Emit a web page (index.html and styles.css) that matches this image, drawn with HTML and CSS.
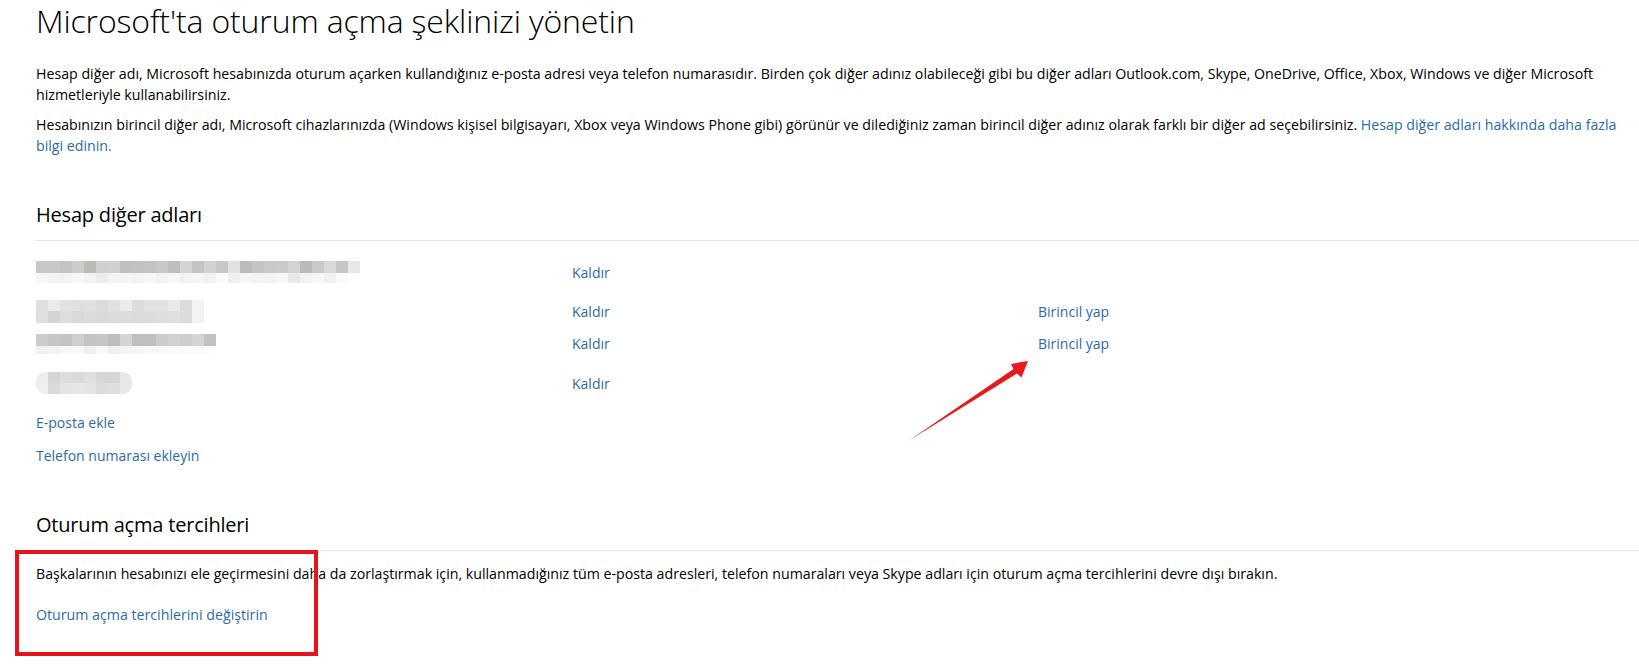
FILE: index.html
```html
<!DOCTYPE html>
<html lang="tr">
<head>
    <meta charset="UTF-8">
    <meta name="viewport" content="width=device-width, initial-scale=1.0">
    <title>Oturum açma şeklinizi yönetin</title>
    <link rel="stylesheet" href="styles.css">
</head>
<body>

<div class="page">
    <h1 class="page-title">Microsoft'ta oturum açma şeklinizi yönetin</h1>

    <p class="intro">Hesap diğer adı, Microsoft hesabınızda oturum açarken kullandığınız e-posta adresi veya telefon numarasıdır. Birden çok diğer adınız olabileceği gibi bu diğer adları Outlook.com, Skype, OneDrive, Office, Xbox, Windows ve diğer Microsoft hizmetleriyle kullanabilirsiniz.</p>
    <p class="intro intro-second">Hesabınızın birincil diğer adı, Microsoft cihazlarınızda (Windows kişisel bilgisayarı, Xbox veya Windows Phone gibi) görünür ve dilediğiniz zaman birincil diğer adınız olarak farklı bir diğer ad seçebilirsiniz. <a href="#">Hesap diğer adları hakkında daha fazla bilgi edinin.</a></p>

    <h2 class="section-title">Hesap diğer adları</h2>

    <div class="alias-list">
        <div class="alias-row">
            <div class="alias-name">
                <svg width="324" height="22" viewBox="0 0 324 22">
                    <g>
                        <rect x="0" y="0" width="12" height="12" fill="#c8c8c8"/>
                        <rect x="12" y="0" width="12" height="12" fill="#c6c7c6"/>
                        <rect x="24" y="0" width="12" height="12" fill="#c4c5c3"/>
                        <rect x="36" y="0" width="12" height="12" fill="#cbcdcb"/>
                        <rect x="48" y="0" width="12" height="12" fill="#b9bbb4"/>
                        <rect x="60" y="0" width="12" height="12" fill="#cdd0d0"/>
                        <rect x="72" y="0" width="12" height="12" fill="#cfd0d0"/>
                        <rect x="84" y="0" width="12" height="12" fill="#c0c0be"/>
                        <rect x="96" y="0" width="12" height="12" fill="#c1c1bf"/>
                        <rect x="108" y="0" width="12" height="12" fill="#c3c3c2"/>
                        <rect x="120" y="0" width="12" height="12" fill="#c7c8c6"/>
                        <rect x="132" y="0" width="12" height="12" fill="#bcbfba"/>
                        <rect x="144" y="0" width="12" height="12" fill="#d4d4d3"/>
                        <rect x="156" y="0" width="12" height="12" fill="#c3c4c3"/>
                        <rect x="168" y="0" width="12" height="12" fill="#d2d2d0"/>
                        <rect x="180" y="0" width="12" height="12" fill="#c6c7c6"/>
                        <rect x="192" y="0" width="12" height="12" fill="#e1e1e0"/>
                        <rect x="204" y="0" width="12" height="12" fill="#bbbcba"/>
                        <rect x="216" y="0" width="12" height="12" fill="#c4c5c3"/>
                        <rect x="228" y="0" width="12" height="12" fill="#c9c9c8"/>
                        <rect x="240" y="0" width="12" height="12" fill="#c9cbcb"/>
                        <rect x="252" y="0" width="12" height="12" fill="#d2d3d2"/>
                        <rect x="264" y="0" width="12" height="12" fill="#b9bbb8"/>
                        <rect x="276" y="0" width="12" height="12" fill="#c9cac8"/>
                        <rect x="288" y="0" width="12" height="12" fill="#d8d9d9"/>
                        <rect x="300" y="0" width="12" height="12" fill="#c5c6c5"/>
                        <rect x="312" y="0" width="12" height="12" fill="#e6e7e8"/>
                    </g>
                    <g>
                        <rect x="0" y="12" width="12" height="10" fill="#f7f7f5"/>
                        <rect x="12" y="12" width="12" height="10" fill="#f3f3f3"/>
                        <rect x="24" y="12" width="12" height="10" fill="#f2f2f2"/>
                        <rect x="36" y="12" width="12" height="10" fill="#f8f7f5"/>
                        <rect x="48" y="12" width="12" height="10" fill="#f3f3f3"/>
                        <rect x="60" y="12" width="12" height="10" fill="#ececec"/>
                        <rect x="72" y="12" width="12" height="10" fill="#f4f4f4"/>
                        <rect x="84" y="12" width="12" height="10" fill="#f5f5f5"/>
                        <rect x="96" y="12" width="12" height="10" fill="#f3f3f3"/>
                        <rect x="108" y="12" width="12" height="10" fill="#f6f6f6"/>
                        <rect x="120" y="12" width="12" height="10" fill="#f2f2f2"/>
                        <rect x="132" y="12" width="12" height="10" fill="#f7f7f5"/>
                        <rect x="144" y="12" width="12" height="10" fill="#f3f3f3"/>
                        <rect x="156" y="12" width="12" height="10" fill="#f5f5f5"/>
                        <rect x="168" y="12" width="12" height="10" fill="#f2f2f2"/>
                        <rect x="180" y="12" width="12" height="10" fill="#fafafa"/>
                        <rect x="192" y="12" width="12" height="10" fill="#f0f0f0"/>
                        <rect x="204" y="12" width="12" height="10" fill="#f6f6f6"/>
                        <rect x="216" y="12" width="12" height="10" fill="#f4f4f4"/>
                        <rect x="228" y="12" width="12" height="10" fill="#f3f3f3"/>
                        <rect x="240" y="12" width="12" height="10" fill="#f6f6f6"/>
                        <rect x="252" y="12" width="12" height="10" fill="#e9e9e8"/>
                        <rect x="264" y="12" width="12" height="10" fill="#f2f2f2"/>
                        <rect x="276" y="12" width="12" height="10" fill="#f7f7f7"/>
                        <rect x="288" y="12" width="12" height="10" fill="#f1f1f1"/>
                        <rect x="300" y="12" width="12" height="10" fill="#fafafa"/>
                    </g>
                </svg>
            </div>
            <a href="#" class="alias-action">Kaldır</a>
            <span></span>
        </div>

        <div class="alias-row gap-above">
            <div class="alias-name">
                <svg width="168" height="23" viewBox="0 0 168 23">
                    <g>
                        <rect x="0" y="0" width="12" height="11" fill="#e0e0e0"/>
                        <rect x="12" y="0" width="12" height="11" fill="#ebebeb"/>
                        <rect x="24" y="0" width="12" height="11" fill="#e2e2e2"/>
                        <rect x="36" y="0" width="12" height="11" fill="#e0e0e0"/>
                        <rect x="48" y="0" width="12" height="11" fill="#e2e1df"/>
                        <rect x="60" y="0" width="12" height="11" fill="#dbdbdb"/>
                        <rect x="72" y="0" width="12" height="11" fill="#e1e1e1"/>
                        <rect x="84" y="0" width="12" height="11" fill="#ececec"/>
                        <rect x="96" y="0" width="12" height="11" fill="#dcdcdc"/>
                        <rect x="108" y="0" width="12" height="11" fill="#e2e2e2"/>
                        <rect x="120" y="0" width="12" height="11" fill="#e2e2e2"/>
                        <rect x="132" y="0" width="12" height="11" fill="#e9e9e9"/>
                        <rect x="144" y="0" width="12" height="11" fill="#dcdcdc"/>
                        <rect x="156" y="0" width="12" height="11" fill="#f3f3f3"/>
                    </g>
                    <g>
                        <rect x="0" y="11" width="12" height="12" fill="#dfdfdf"/>
                        <rect x="12" y="11" width="12" height="12" fill="#d4d4d4"/>
                        <rect x="24" y="11" width="12" height="12" fill="#dddddd"/>
                        <rect x="36" y="11" width="12" height="12" fill="#d9d9d9"/>
                        <rect x="48" y="11" width="12" height="12" fill="#dcdcdc"/>
                        <rect x="60" y="11" width="12" height="12" fill="#d9d9d9"/>
                        <rect x="72" y="11" width="12" height="12" fill="#dadbdb"/>
                        <rect x="84" y="11" width="12" height="12" fill="#dcdcdc"/>
                        <rect x="96" y="11" width="12" height="12" fill="#dadbdb"/>
                        <rect x="108" y="11" width="12" height="12" fill="#dcdcdc"/>
                        <rect x="120" y="11" width="12" height="12" fill="#dddddd"/>
                        <rect x="132" y="11" width="12" height="12" fill="#dfdfdf"/>
                        <rect x="144" y="11" width="12" height="12" fill="#dadbdb"/>
                        <rect x="156" y="11" width="12" height="12" fill="#f3f3f3"/>
                    </g>
                </svg>
            </div>
            <a href="#" class="alias-action">Kaldır</a>
            <a href="#" class="alias-action">Birincil yap</a>
        </div>

        <div class="alias-row">
            <div class="alias-name">
                <svg width="180" height="20" viewBox="0 0 180 20">
                    <g>
                        <rect x="0" y="0" width="12" height="12" fill="#cccccc"/>
                        <rect x="12" y="0" width="12" height="12" fill="#c6c6c6"/>
                        <rect x="24" y="0" width="12" height="12" fill="#c4c4c4"/>
                        <rect x="36" y="0" width="12" height="12" fill="#cfcfcf"/>
                        <rect x="48" y="0" width="12" height="12" fill="#c4c4c4"/>
                        <rect x="60" y="0" width="12" height="12" fill="#c6c6c6"/>
                        <rect x="72" y="0" width="12" height="12" fill="#bdbdbd"/>
                        <rect x="84" y="0" width="12" height="12" fill="#d4d4d4"/>
                        <rect x="96" y="0" width="12" height="12" fill="#bfc0bd"/>
                        <rect x="108" y="0" width="12" height="12" fill="#bfc0bd"/>
                        <rect x="120" y="0" width="12" height="12" fill="#cccccc"/>
                        <rect x="132" y="0" width="12" height="12" fill="#d1d1d1"/>
                        <rect x="144" y="0" width="12" height="12" fill="#cecece"/>
                        <rect x="156" y="0" width="12" height="12" fill="#d4d4d4"/>
                        <rect x="168" y="0" width="12" height="12" fill="#c2c2c2"/>
                    </g>
                    <g>
                        <rect x="0" y="12" width="12" height="8" fill="#f0f0f0"/>
                        <rect x="12" y="12" width="12" height="8" fill="#f3f3f3"/>
                        <rect x="24" y="12" width="12" height="8" fill="#f7f7f7"/>
                        <rect x="36" y="12" width="12" height="8" fill="#f8f8f6"/>
                        <rect x="48" y="12" width="12" height="8" fill="#f0f0f0"/>
                        <rect x="60" y="12" width="12" height="8" fill="#f7f7f7"/>
                        <rect x="72" y="12" width="12" height="8" fill="#efefef"/>
                        <rect x="84" y="12" width="12" height="8" fill="#f3f3f3"/>
                        <rect x="96" y="12" width="12" height="8" fill="#f5f5f5"/>
                        <rect x="108" y="12" width="12" height="8" fill="#f7f7f7"/>
                        <rect x="120" y="12" width="12" height="8" fill="#f8f8f8"/>
                        <rect x="132" y="12" width="12" height="8" fill="#fafafa"/>
                        <rect x="144" y="12" width="12" height="8" fill="#fbfbfb"/>
                        <rect x="156" y="12" width="12" height="8" fill="#fafafa"/>
                        <rect x="168" y="12" width="12" height="8" fill="#fcfcfc"/>
                    </g>
                </svg>
            </div>
            <a href="#" class="alias-action">Kaldır</a>
            <a href="#" class="alias-action">Birincil yap</a>
        </div>

        <div class="alias-row gap-above">
            <div class="alias-name">
                <svg width="96" height="22" viewBox="0 0 96 22">
                    <clipPath id="pill">
                        <rect x="0" y="0" width="96" height="22" rx="9"/>
                    </clipPath>
                    <g clip-path="url(#pill)">
                        <rect x="0" y="0" width="12" height="11" fill="#eeeeee"/>
                        <rect x="12" y="0" width="12" height="11" fill="#d5d5d5"/>
                        <rect x="24" y="0" width="12" height="11" fill="#dddddd"/>
                        <rect x="36" y="0" width="12" height="11" fill="#dcdad8"/>
                        <rect x="48" y="0" width="12" height="11" fill="#dfdfdf"/>
                        <rect x="60" y="0" width="12" height="11" fill="#d6d6d6"/>
                        <rect x="72" y="0" width="12" height="11" fill="#d6d6d6"/>
                        <rect x="84" y="0" width="12" height="11" fill="#e6e7e9"/>
                        <rect x="0" y="11" width="12" height="11" fill="#efefef"/>
                        <rect x="12" y="11" width="12" height="11" fill="#dadada"/>
                        <rect x="24" y="11" width="12" height="11" fill="#e4e4e4"/>
                        <rect x="36" y="11" width="12" height="11" fill="#e5e5e5"/>
                        <rect x="48" y="11" width="12" height="11" fill="#e4e4e4"/>
                        <rect x="60" y="11" width="12" height="11" fill="#dcdcdc"/>
                        <rect x="72" y="11" width="12" height="11" fill="#dedede"/>
                        <rect x="84" y="11" width="12" height="11" fill="#e6e7e9"/>
                    </g>
                </svg>
            </div>
            <a href="#" class="alias-action">Kaldır</a>
            <span></span>
        </div>
    </div>

    <div class="add-links">
        <a href="#">E-posta ekle</a>
        <a href="#">Telefon numarası ekleyin</a>
    </div>

    <h2 class="section-title">Oturum açma tercihleri</h2>

    <p class="pref-text">Başkalarının hesabınızı ele geçirmesini daha da zorlaştırmak için, kullanmadığınız tüm e-posta adresleri, telefon numaraları veya Skype adları için oturum açma tercihlerini devre dışı bırakın.</p>
    <a href="#" class="pref-link">Oturum açma tercihlerini değiştirin</a>
</div>

<!-- annotation overlays -->
<div class="mark-box"></div>
<svg class="mark-arrow" width="130" height="100" viewBox="0 0 130 100">
    <path d="M9 90.5 L113.5 19 L111 14 L128 11 L121.5 27.5 L117 23.5 Z" fill="#e8191c"/>
</svg>

</body>
</html>
```

FILE: styles.css
```css
body {
    margin: 0;
    font-family: "Open Sans", "Noto Sans", sans-serif;
    color: #000;
    background: #fff;
}
a {
    color: #2b6ca8;
    text-decoration: none;
}
.page {
    padding-left: 36px;
}
.page-title {
    margin: 0;
    font-size: 32px;
    font-weight: 300;
    line-height: 42px;
    letter-spacing: -0.15px;
}
.intro {
    margin: 21px 0 0;
    font-size: 14.2px;
    line-height: 21px;
}
.intro-second {
    margin-top: 9px;
}
.section-title {
    margin: 45px 0 0;
    padding-bottom: 11px;
    border-bottom: 1px solid #e6e6e6;
    font-size: 20px;
    font-weight: 400;
    line-height: 28px;
    letter-spacing: -0.2px;
}
.alias-list {
    margin-top: 15px;
}
.alias-row {
    display: grid;
    grid-template-columns: 536px 466px auto;
    align-items: center;
    height: 32px;
    font-size: 14px;
}
.alias-row.gap-above {
    margin-top: 7.5px;
}
.alias-name svg {
    display: block;
}
.add-links {
    display: flex;
    flex-direction: column;
    align-items: flex-start;
    gap: 13px;
    margin-top: 14px;
    font-size: 14px;
    line-height: 20px;
}
.pref-text {
    margin: 12px 0 0;
    font-size: 14.2px;
    line-height: 21px;
}
.pref-link {
    display: inline-block;
    margin-top: 20px;
    font-size: 14.2px;
    line-height: 21px;
}
.mark-box {
    position: absolute;
    left: 15px;
    top: 550px;
    width: 295px;
    height: 98px;
    border: 4px solid #e8141b;
}
.mark-arrow {
    position: absolute;
    left: 900px;
    top: 350px;
}
```
